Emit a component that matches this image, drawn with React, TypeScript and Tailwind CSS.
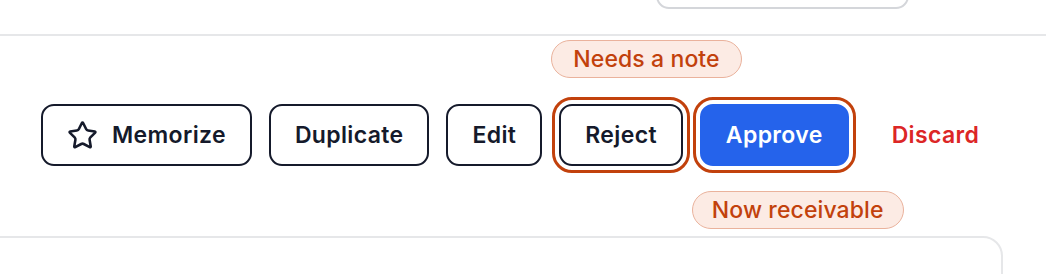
import React from "react";
import { Star } from "lucide-react";

const btn =
  "h-[62px] px-[24px] rounded-[13px] border-2 flex items-center text-[23px] tracking-[0.35px] font-semibold leading-none whitespace-nowrap";

const pill =
  "absolute left-[-8px] h-[38px] flex items-center rounded-full border-[1.5px] border-[#eab29c] bg-[#fcebe4] text-[#c2410c] text-[23px] tracking-[0.1px] font-medium whitespace-nowrap";

export default function App() {
  return (
    <div className="w-[1046px] h-[274px] overflow-hidden bg-white font-['Inter',sans-serif]">
      <div className="h-[34px] flex justify-start">
        <div className="ml-[656px] mt-[-22px] w-[253px] h-[31px] rounded-[13px] border-2 border-[#d4d6da]" />
      </div>
      <div className="border-t-2 border-[#e6e7e9]" />
      <div className="h-[200px] pt-[68px] pl-[41px]">
        <div className="flex items-center gap-[17px]">
          <button className={`${btn} border-[#151a2b] text-[#151a2b] gap-[14px]`}>
            <Star size={31} strokeWidth={2} />
            Memorize
          </button>
          <button className={`${btn} border-[#151a2b] text-[#151a2b]`}>Duplicate</button>
          <button className={`${btn} border-[#151a2b] text-[#151a2b]`}>Edit</button>
          <div className="relative">
            <span className={`${pill} bottom-[88px] px-[21px]`}>Needs a note</span>
            <button
              className={`${btn} border-[#151a2b] text-[#151a2b] outline-[3px] outline-solid outline-[#c2410c] outline-offset-[4px]`}
            >
              Reject
            </button>
          </div>
          <div className="relative">
            <button
              className={`${btn} border-[#2563eb] bg-[#2563eb] text-white outline-[3px] outline-solid outline-[#c2410c] outline-offset-[4px]`}
            >
              Approve
            </button>
            <span className={`${pill} top-[87px] px-[19px]`}>Now receivable</span>
          </div>
          <button className={`${btn} border-transparent text-[#dc2626]`}>Discard</button>
        </div>
      </div>
      <div className="ml-[-10px] w-[1013px] h-[60px] border-2 border-[#e6e7e9] rounded-tr-[20px]" />
    </div>
  );
}
